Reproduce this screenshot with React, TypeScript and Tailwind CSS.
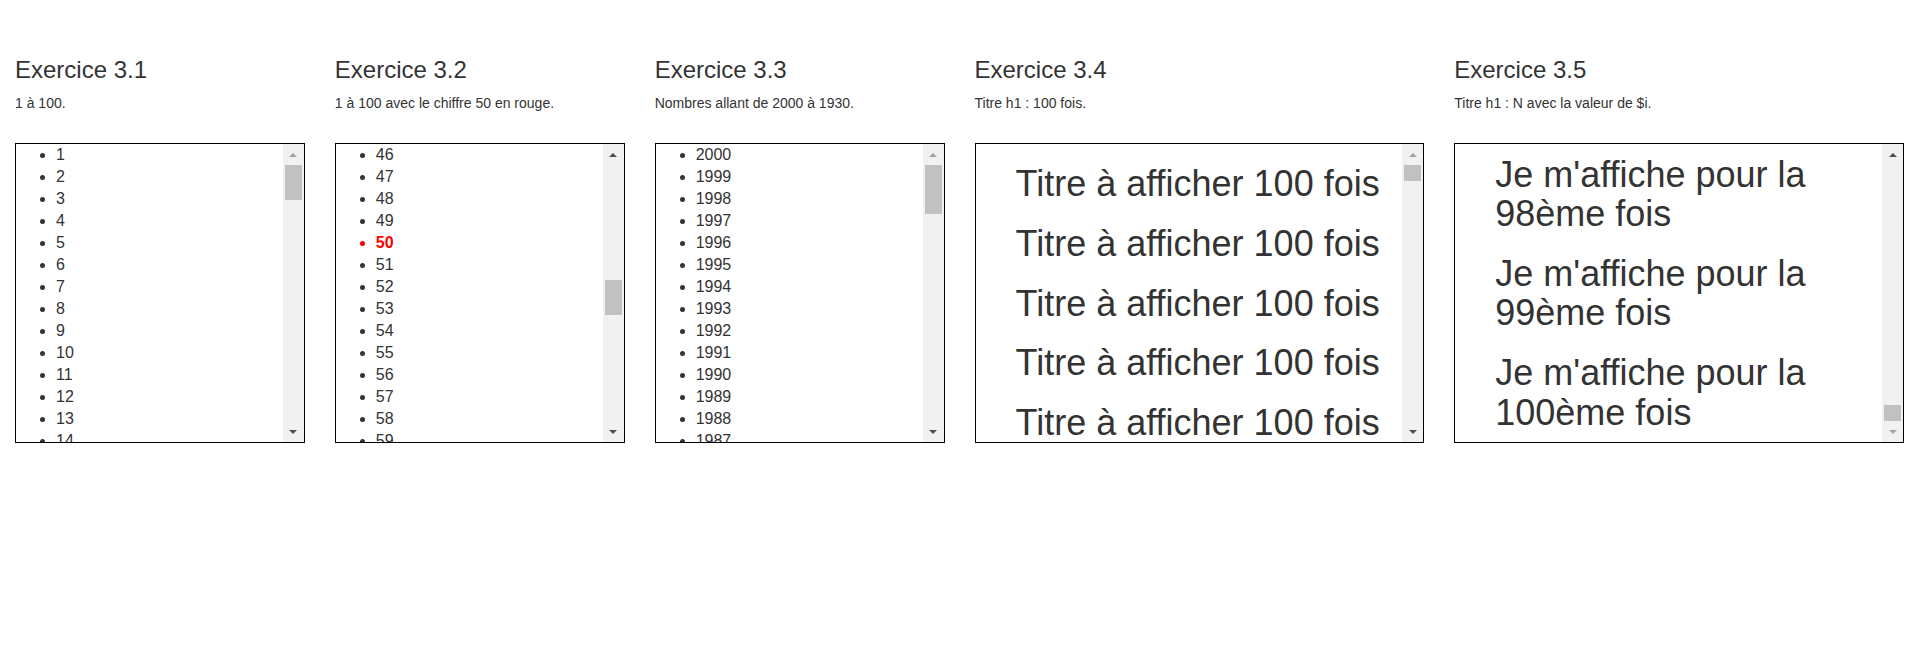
import React, { useLayoutEffect, useRef, useState } from "react";

type ScrollPos = number | "bottom";

const BTN = 21;

function Arrow({ dir, active }: { dir: "up" | "down"; active: boolean }) {
  if (dir === "up") {
    return (
      <div
        className={
          active
            ? "w-0 h-0 border-x-[4px] border-x-transparent border-b-[4px] border-b-[#505050]"
            : "w-0 h-0 border-x-[4px] border-x-transparent border-b-[4px] border-b-[#a3a3a3]"
        }
      />
    );
  }
  return (
    <div
      className={
        active
          ? "w-0 h-0 border-x-[4px] border-x-transparent border-t-[4px] border-t-[#505050]"
          : "w-0 h-0 border-x-[4px] border-x-transparent border-t-[4px] border-t-[#a3a3a3]"
      }
    />
  );
}

function ScrollBox({ scroll = 0, children }: { scroll?: ScrollPos; children: React.ReactNode }) {
  const ref = useRef<HTMLDivElement>(null);
  const [bar, setBar] = useState({ top: 0, size: 16, atTop: true, atBottom: false });

  useLayoutEffect(() => {
    const el = ref.current;
    if (!el) return;
    el.scrollTop = scroll === "bottom" ? el.scrollHeight : scroll;
    // fake scrollbar, computed the way chrome does it
    const track = el.clientHeight - BTN * 2;
    const max = el.scrollHeight - el.clientHeight;
    const size = Math.max(16, (track * el.clientHeight) / el.scrollHeight);
    const top = max > 0 ? ((track - size) * el.scrollTop) / max : 0;
    setBar({ top, size, atTop: el.scrollTop <= 0, atBottom: el.scrollTop >= max - 1 });
  }, [scroll]);

  return (
    <div className="flex h-[300px] border border-black bg-white">
      <div ref={ref} className="flex-1 min-w-0 overflow-hidden">
        {children}
      </div>
      <div className="w-[21px] shrink-0 bg-[#f1f1f1] flex flex-col">
        <div className="h-[21px] flex items-center justify-center">
          <Arrow dir="up" active={!bar.atTop} />
        </div>
        <div className="flex-1 relative">
          <div
            className="absolute left-[2px] right-[2px] bg-[#c1c1c1]"
            style={{ top: bar.top, height: bar.size }}
          />
        </div>
        <div className="h-[21px] flex items-center justify-center">
          <Arrow dir="down" active={!bar.atBottom} />
        </div>
      </div>
    </div>
  );
}

function Exercise({
  title,
  subtitle,
  span,
  children,
}: {
  title: string;
  subtitle: string;
  span: "2" | "3";
  children: React.ReactNode;
}) {
  return (
    <div className={span === "2" ? "col-span-2 px-[15px]" : "col-span-3 px-[15px]"}>
      <h3 className="text-[24px] leading-[26.4px] font-normal">{title}</h3>
      <p className="mt-[10px] mb-[30px] text-[14px] leading-[20px]">{subtitle}</p>
      {children}
    </div>
  );
}

const range = (from: number, to: number) => {
  const out: number[] = [];
  const step = from <= to ? 1 : -1;
  for (let i = from; step > 0 ? i <= to : i >= to; i += step) out.push(i);
  return out;
};

export default function App() {
  return (
    <div className="min-h-screen bg-white text-[#333] font-['Liberation_Sans',Arial,sans-serif]">
      <div className="grid grid-cols-12 pt-[57px]">
        {/* 3.1 : 1 à 100 */}
        <Exercise title="Exercice 3.1" subtitle="1 à 100." span="2">
          <ScrollBox>
            <ul className="list-disc pl-10 pb-[10px] text-[16px] leading-[22px]">
              {range(1, 100).map((n) => (
                <li key={n}>{n}</li>
              ))}
            </ul>
          </ScrollBox>
        </Exercise>

        {/* 3.2 : 50 en rouge */}
        <Exercise title="Exercice 3.2" subtitle="1 à 100 avec le chiffre 50 en rouge." span="2">
          <ScrollBox scroll={45 * 22}>
            <ul className="list-disc pl-10 pb-[10px] text-[16px] leading-[22px]">
              {range(1, 100).map((n) =>
                n === 50 ? (
                  <li key={n} className="text-[#ff0000] font-bold">
                    {n}
                  </li>
                ) : (
                  <li key={n}>{n}</li>
                )
              )}
            </ul>
          </ScrollBox>
        </Exercise>

        {/* 3.3 : 2000 -> 1930 */}
        <Exercise title="Exercice 3.3" subtitle="Nombres allant de 2000 à 1930." span="2">
          <ScrollBox>
            <ul className="list-disc pl-10 pb-[10px] text-[16px] leading-[22px]">
              {range(2000, 1930).map((n) => (
                <li key={n}>{n}</li>
              ))}
            </ul>
          </ScrollBox>
        </Exercise>

        {/* 3.4 : h1 x100 */}
        <Exercise title="Exercice 3.4" subtitle="Titre h1 : 100 fois." span="3">
          <ScrollBox>
            <div className="flex flex-col gap-[20px] pl-10 pt-[20px] pb-[10px]">
              {range(1, 100).map((n) => (
                <h1 key={n} className="text-[36px] leading-[39.6px] font-normal">
                  Titre à afficher 100 fois
                </h1>
              ))}
            </div>
          </ScrollBox>
        </Exercise>

        {/* 3.5 : h1 avec $i */}
        <Exercise title="Exercice 3.5" subtitle="Titre h1 : N avec la valeur de $i." span="3">
          <ScrollBox scroll="bottom">
            <div className="flex flex-col gap-[20px] pl-10 pt-[20px] pb-[10px]">
              {range(1, 100).map((n) => (
                <h1 key={n} className="text-[36px] leading-[39.6px] font-normal">
                  Je m'affiche pour la {n}ème fois
                </h1>
              ))}
            </div>
          </ScrollBox>
        </Exercise>
      </div>
    </div>
  );
}
